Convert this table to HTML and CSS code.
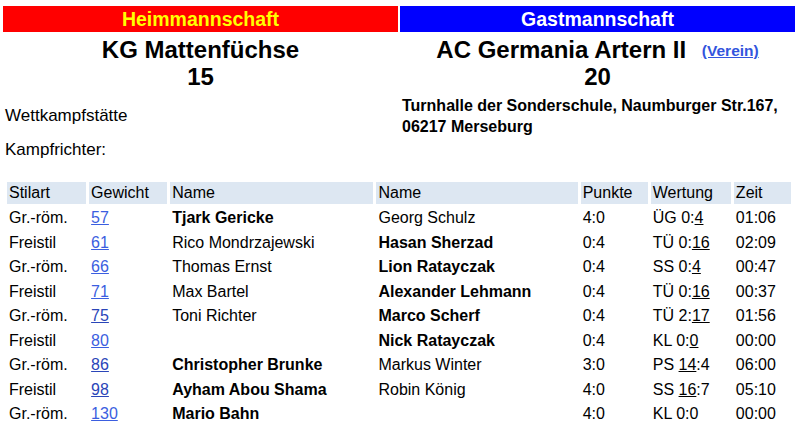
FILE: index.html
```html
<!DOCTYPE html>
<html lang="de">
<head>
<meta charset="utf-8">
<title>Kampf</title>
<link rel="stylesheet" href="styles.css">
</head>
<body>
<div class="top">
  <div class="bar home">Heimmannschaft</div>
  <div class="bar guest">Gastmannschaft</div>
  <div class="team">KG Mattenfüchse</div>
  <div class="team">AC Germania Artern II <a href="#" class="verein">(Verein)</a></div>
  <div class="score">15</div>
  <div class="score">20</div>
  <div class="label venue-label">Wettkampfstätte</div>
  <div class="venue">Turnhalle der Sonderschule, Naumburger Str.167, 06217 Merseburg</div>
  <div class="label judge">Kampfrichter:</div>
  <div class="judge"></div>
</div>
<table class="bouts">
  <colgroup>
    <col class="c-style"><col class="c-weight"><col class="c-name1"><col class="c-name2"><col class="c-points"><col class="c-rating"><col class="c-time">
  </colgroup>
  <thead>
    <tr><th>Stilart</th><th>Gewicht</th><th>Name</th><th>Name</th><th>Punkte</th><th>Wertung</th><th>Zeit</th></tr>
  </thead>
  <tbody>
    <tr><td>Gr.-röm.</td><td><a href="#">57</a></td><td class="win">Tjark Gericke</td><td>Georg Schulz</td><td>4:0</td><td>ÜG 0:<u>4</u></td><td>01:06</td></tr>
    <tr><td>Freistil</td><td><a href="#">61</a></td><td>Rico Mondrzajewski</td><td class="win">Hasan Sherzad</td><td>0:4</td><td>TÜ 0:<u>16</u></td><td>02:09</td></tr>
    <tr><td>Gr.-röm.</td><td><a href="#">66</a></td><td>Thomas Ernst</td><td class="win">Lion Ratayczak</td><td>0:4</td><td>SS 0:<u>4</u></td><td>00:47</td></tr>
    <tr><td>Freistil</td><td><a href="#">71</a></td><td>Max Bartel</td><td class="win">Alexander Lehmann</td><td>0:4</td><td>TÜ 0:<u>16</u></td><td>00:37</td></tr>
    <tr><td>Gr.-röm.</td><td><a href="#" class="visited">75</a></td><td>Toni Richter</td><td class="win">Marco Scherf</td><td>0:4</td><td>TÜ 2:<u>17</u></td><td>01:56</td></tr>
    <tr><td>Freistil</td><td><a href="#">80</a></td><td></td><td class="win">Nick Ratayczak</td><td>0:4</td><td>KL 0:<u>0</u></td><td>00:00</td></tr>
    <tr><td>Gr.-röm.</td><td><a href="#" class="visited">86</a></td><td class="win">Christopher Brunke</td><td>Markus Winter</td><td>3:0</td><td>PS <u>14</u>:4</td><td>06:00</td></tr>
    <tr><td>Freistil</td><td><a href="#" class="visited">98</a></td><td class="win">Ayham Abou Shama</td><td>Robin König</td><td>4:0</td><td>SS <u>16</u>:7</td><td>05:10</td></tr>
    <tr><td>Gr.-röm.</td><td><a href="#">130</a></td><td class="win">Mario Bahn</td><td></td><td>4:0</td><td>KL 0:0</td><td>00:00</td></tr>
  </tbody>
</table>
</body>
</html>
```
FILE: styles.css
```css
html, body {
  margin: 0;
  padding: 0;
  background: #ffffff;
}
body {
  font-family: "Liberation Sans", Arial, sans-serif;
  color: #000;
}
.top {
  display: grid;
  grid-template-columns: 395px 395px;
  column-gap: 2px;
  margin: 6px 0 0 3px;
}
.bar {
  height: 26px;
  line-height: 26px;
  text-align: center;
  font-weight: bold;
  font-size: 19.5px;
}
.home {
  background: #ff0000;
  color: #ffff00;
}
.guest {
  background: #0000ff;
  color: #ffffff;
}
.team {
  text-align: center;
  font-weight: bold;
  font-size: 24px;
  line-height: 26px;
  padding-top: 5px;
}
.verein {
  font-size: 15.5px;
  color: #3355dd;
  margin-left: 9px;
  vertical-align: 2px;
}
.score {
  text-align: center;
  font-weight: bold;
  font-size: 24px;
  line-height: 26px;
}
.label {
  font-size: 17px;
  padding-left: 2px;
  display: flex;
  align-items: center;
}
.venue-label, .venue {
  margin-top: 5px;
}
.venue {
  font-size: 16px;
  font-weight: bold;
  line-height: 21px;
  padding: 0 0 0 2px;
}
.judge {
  margin-top: 3px;
  height: 20px;
}
.bouts {
  margin: 19px 0 0 4px;
  width: 790px;
  table-layout: fixed;
  border-collapse: separate;
  border-spacing: 3px;
  font-size: 16px;
}
.c-style { width: 79px; }
.c-weight { width: 78px; }
.c-name1 { width: 203px; }
.c-name2 { width: 201px; }
.c-points { width: 67px; }
.c-rating { width: 80px; }
.c-time { width: 57px; }
.bouts th {
  background: #dde7f2;
  font-weight: normal;
  text-align: left;
  padding: 2px;
  height: 18px;
  line-height: 18px;
}
.bouts td {
  padding: 2px;
  height: 17.5px;
  line-height: 17.5px;
  white-space: nowrap;
}
.bouts td.win {
  font-weight: bold;
}
.bouts a {
  color: #3b5ee0;
}
.bouts a.visited {
  color: #2a45b8;
}
```
